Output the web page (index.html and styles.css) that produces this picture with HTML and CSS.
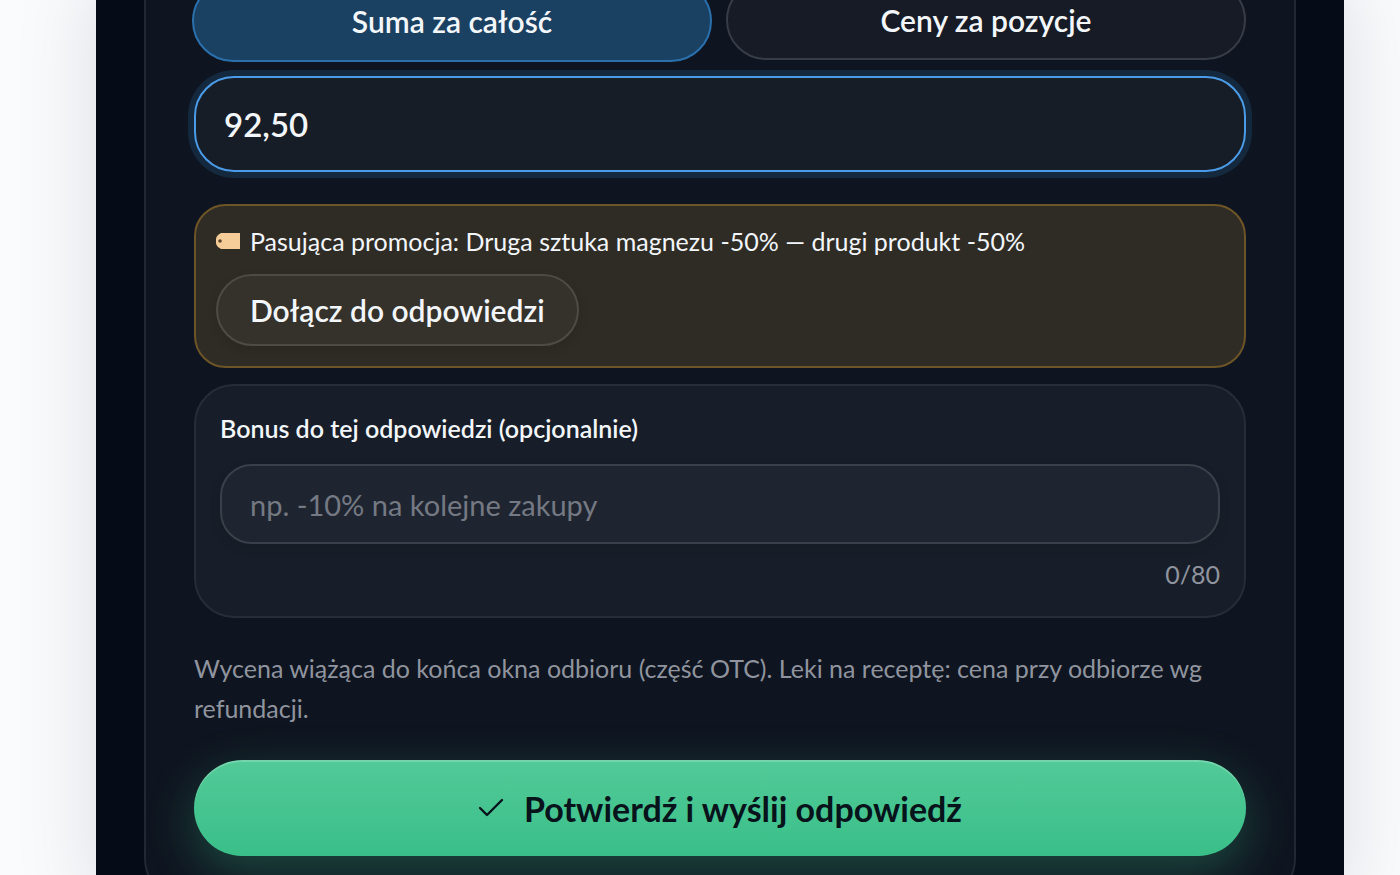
FILE: index.html
```
<!DOCTYPE html>
<html lang="pl">
<head>
  <meta charset="UTF-8">
  <meta name="viewport" content="width=device-width, initial-scale=1.0">
  <title>Odpowiedź apteki</title>
  <link rel="stylesheet" href="styles.css">
</head>
<body>

  <main class="screen">
    <form class="card">

      <div class="mode-switch">
        <button type="button" class="mode-btn active" aria-pressed="true">Suma za całość</button>
        <button type="button" class="mode-btn" aria-pressed="false">Ceny za pozycje</button>
      </div>

      <input class="price-input" type="text" inputmode="decimal" value="92,50" aria-label="Suma za całość">

      <section class="promo">
        <p class="promo-text">
          <svg class="tag-icon" viewBox="0 0 24 16" aria-hidden="true">
            <path d="M5 0H24V16H5L2 14Q0 12 0 10V6Q0 4 2 2Z" fill="#f6cd98"/>
            <circle cx="4" cy="8" r="1.8" fill="#5d4428"/>
          </svg>
          <span>Pasująca promocja: Druga sztuka magnezu -50% — drugi produkt -50%</span>
        </p>
        <button type="button" class="promo-btn">Dołącz do odpowiedzi</button>
      </section>

      <section class="bonus">
        <label class="bonus-label" for="bonus">Bonus do tej odpowiedzi (opcjonalnie)</label>
        <input class="bonus-input" id="bonus" type="text" maxlength="80" placeholder="np. -10% na kolejne zakupy">
        <span class="counter">0/80</span>
      </section>

      <p class="note">Wycena wiążąca do końca okna odbioru (część OTC). Leki na receptę: cena przy odbiorze wg refundacji.</p>

      <button type="submit" class="submit-btn">
        <svg class="check-icon" viewBox="0 0 26 20" fill="none" stroke="currentColor" stroke-width="2.4" stroke-linecap="round" stroke-linejoin="round" aria-hidden="true">
          <path d="M2 10L9 17L24 2"/>
        </svg>
        Potwierdź i wyślij odpowiedź
      </button>

    </form>
  </main>

</body>
</html>
```
FILE: styles.css
```
* {
  box-sizing: border-box;
}

html {
  overflow: hidden;
  background-color: #fafbfd;
}

body {
  margin: 0;
  padding: 0 56px 0 96px;
  font-family: Lato, "Open Sans", sans-serif;
  font-size: 25px;
  color: #f3f6fb;
}

button,
input {
  font-family: inherit;
  color: inherit;
}

button {
  cursor: pointer;
}

p {
  margin: 0;
}

.screen {
  min-height: 100vh;
  padding: 0 48px;
  background-color: #060c17;
  box-shadow: 0 0 80px rgba(15, 18, 35, 0.12);
}

.card {
  padding: 0 48px 48px;
  border: 2px solid #222832;
  border-top: none;
  border-radius: 0 0 48px 48px;
  background-color: #0f1520;
}

/* the switch starts above the visible part of the screen */
.mode-switch {
  display: flex;
  align-items: flex-start;
  gap: 14px;
  margin: -20px 0 0 -2px;
}

.mode-btn {
  flex: 1;
  height: 80px;
  padding: 0;
  border: 2px solid #373c46;
  border-radius: 40px;
  background-color: #161b26;
  font-size: 30px;
  font-weight: 600;
}

.mode-btn.active {
  height: 82px;
  border-color: #2a70ad;
  border-radius: 41px;
  background-color: #1b4162;
}

.price-input {
  display: block;
  width: 100%;
  height: 96px;
  margin-top: 14px;
  padding: 0 28px;
  border: 2px solid #4a9be8;
  border-radius: 40px;
  outline: none;
  background-color: #171d27;
  box-shadow: 0 0 0 6px #14283e;
  font-size: 33px;
  font-weight: 600;
}

.promo {
  margin-top: 32px;
  padding: 20px;
  border: 2px solid #6e5527;
  border-radius: 32px;
  background-color: #2f2c25;
}

.promo-text {
  display: flex;
  align-items: center;
  gap: 10px;
  margin-bottom: 18px;
  line-height: 30px;
}

.tag-icon {
  flex: none;
  width: 24px;
  height: 16px;
}

.promo-btn {
  display: block;
  height: 72px;
  padding: 0 32px;
  border: 2px solid #4d4b46;
  border-radius: 36px;
  background-color: #35322b;
  box-shadow: 0 4px 12px rgba(0, 0, 0, 0.1);
  font-size: 30px;
  font-weight: 600;
}

.bonus {
  display: flex;
  flex-direction: column;
  margin-top: 16px;
  padding: 24px;
  border: 2px solid #272d37;
  border-radius: 40px;
  background-color: #181e29;
}

.bonus-label {
  margin-bottom: 18px;
  font-weight: 600;
  line-height: 36px;
}

.bonus-input {
  width: 100%;
  height: 80px;
  padding: 0 28px;
  border: 2px solid #3a404a;
  border-radius: 32px;
  outline: none;
  background-color: #1f2530;
  box-shadow: 0 4px 12px rgba(0, 0, 0, 0.12);
  font-size: 29px;
}

.bonus-input::placeholder {
  color: #747983;
  opacity: 1;
}

.counter {
  align-self: flex-end;
  margin-top: 12px;
  color: #8f949e;
  line-height: 36px;
}

.note {
  margin: 30px 0 32px;
  color: #8f949e;
  line-height: 40px;
}

.submit-btn {
  display: flex;
  align-items: center;
  justify-content: center;
  gap: 20px;
  width: 100%;
  height: 96px;
  padding: 0;
  border: none;
  border-radius: 48px;
  background-image: linear-gradient(#52ca98, #3abf89);
  box-shadow: inset 0 2px 0 rgba(255, 255, 255, 0.2), 0 16px 48px rgba(58, 191, 137, 0.3);
  color: #06131a;
  font-size: 34px;
  font-weight: 700;
}

.check-icon {
  width: 26px;
  height: 20px;
}
```
